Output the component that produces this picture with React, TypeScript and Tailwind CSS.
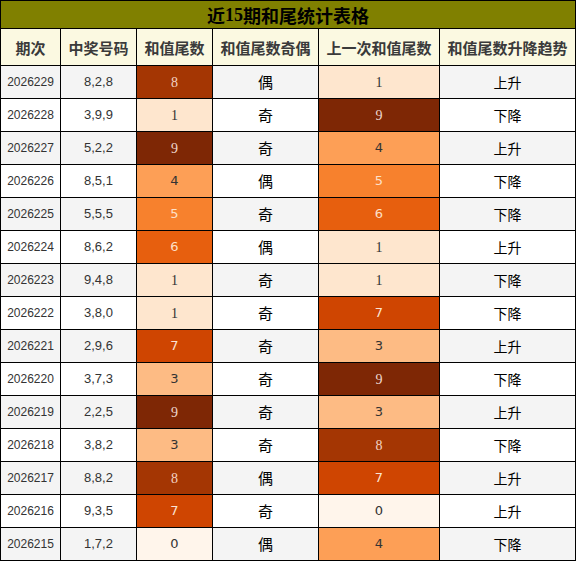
import React from "react";

const rows: [string, string, number, string, number, string][] = [
  ["2026229", "8,2,8", 8, "偶", 1, "上升"],
  ["2026228", "3,9,9", 1, "奇", 9, "下降"],
  ["2026227", "5,2,2", 9, "奇", 4, "上升"],
  ["2026226", "8,5,1", 4, "偶", 5, "下降"],
  ["2026225", "5,5,5", 5, "奇", 6, "下降"],
  ["2026224", "8,6,2", 6, "偶", 1, "上升"],
  ["2026223", "9,4,8", 1, "奇", 1, "下降"],
  ["2026222", "3,8,0", 1, "奇", 7, "下降"],
  ["2026221", "2,9,6", 7, "奇", 3, "上升"],
  ["2026220", "3,7,3", 3, "奇", 9, "下降"],
  ["2026219", "2,2,5", 9, "奇", 3, "上升"],
  ["2026218", "3,8,2", 3, "奇", 8, "下降"],
  ["2026217", "8,8,2", 8, "偶", 7, "上升"],
  ["2026216", "9,3,5", 7, "奇", 0, "上升"],
  ["2026215", "1,7,2", 0, "偶", 4, "下降"],
];

const heat: Record<number, string> = {
  0: "bg-[#fff5eb] text-[#333333]",
  1: "bg-[#fee6ce] text-[#333333]",
  2: "bg-[#fdd0a2] text-[#333333]",
  3: "bg-[#fdbb84] text-[#333333]",
  4: "bg-[#fd9f56] text-[#333333]",
  5: "bg-[#f7812d] text-[#fde0c8]",
  6: "bg-[#e75f0e] text-[#fde0c8]",
  7: "bg-[#cf4501] text-[#fbe3d3]",
  8: "bg-[#a43603] text-[#f3d3c3]",
  9: "bg-[#7e2705] text-[#eed8cf]",
};

const serifDigit = (n: number) =>
  n === 1 || n === 8 || n === 9
    ? "font-['Liberation_Serif',serif] text-[14px]"
    : "font-['DejaVu_Sans',sans-serif] text-[13px]";

const cell = "border-r border-b border-black flex items-center justify-center";

export default function App() {
  return (
    <div className="w-[576px] h-[561px] bg-white font-['Noto_Sans_CJK_SC',sans-serif]">
      <div className="grid grid-cols-[60px_76px_76px_106px_121px_136px] border-l border-t border-black">
        <div className="col-span-6 h-[28px] bg-[#808000] border-r border-b border-black flex items-center justify-center text-[18px] font-bold text-black leading-none">
          <span>近</span>
          <span className="font-['Liberation_Serif',serif]">15</span>
          <span>期和尾统计表格</span>
        </div>
        {["期次", "中奖号码", "和值尾数", "和值尾数奇偶", "上一次和值尾数", "和值尾数升降趋势"].map((h) => (
          <div key={h} className={`${cell} h-[37px] bg-[#fbf9e1] text-[15px] font-bold text-[#3a3a3a] leading-none`}>
            {h}
          </div>
        ))}
        {rows.map((r, i) => {
          const bg = i % 2 === 0 ? "bg-[#f4f4f4]" : "bg-white";
          return (
            <React.Fragment key={r[0]}>
              <div className={`${cell} h-[33px] ${bg} text-[12px] text-[#333333] font-['Liberation_Sans',sans-serif]`}>{r[0]}</div>
              <div className={`${cell} h-[33px] ${bg} text-[13px] text-[#333333] font-['Liberation_Sans',sans-serif]`}>{r[1]}</div>
              <div className={`${cell} h-[33px] ${heat[r[2]]} ${serifDigit(r[2])}`}>{r[2]}</div>
              <div className={`${cell} h-[33px] ${bg} text-[15px] text-black`}>{r[3]}</div>
              <div className={`${cell} h-[33px] ${heat[r[4]]} ${serifDigit(r[4])}`}>{r[4]}</div>
              <div className={`${cell} h-[33px] ${bg} text-[14px] text-black`}>{r[5]}</div>
            </React.Fragment>
          );
        })}
      </div>
    </div>
  );
}
